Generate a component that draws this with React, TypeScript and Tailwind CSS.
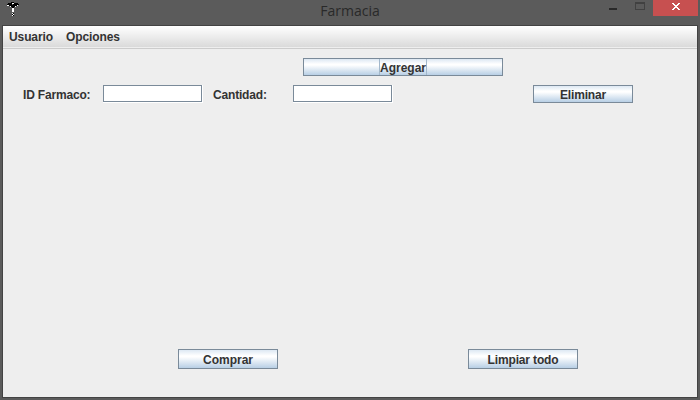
import type { ReactNode } from "react";

function SwingButton({ children, className, focused = false }: { children: ReactNode; className: string; focused?: boolean }) {
  return (
    <button
      className={`flex shrink-0 items-center justify-center border border-[#7a8a99] bg-[linear-gradient(to_bottom,#dde8f3_0%,#ffffff_32%,#ffffff_38%,#b8cfe5_100%)] whitespace-nowrap ${className}`}
    >
      {focused ? (
        <span className="flex h-full w-12 items-center justify-center border-x border-[#a3b8cc] pt-0.5">{children}</span>
      ) : (
        <span className="pt-0.5">{children}</span>
      )}
    </button>
  );
}

function TextField({ label }: { label: string }) {
  return (
    <div className="h-[18px] w-[100px] shrink-0 border-r border-b border-white">
      <input aria-label={label} className="block h-[17px] w-[99px] border border-[#7a8a99] bg-white px-0.5 outline-none" />
    </div>
  );
}

function AppIcon() {
  return (
    <svg width="14" height="16" viewBox="0 0 14 16" shapeRendering="crispEdges" className="ml-1.5 mt-0.5">
      <path fill="#000" d="M5 0h3v1H5zM2 1h4v1H2zM8 1h4v1H8zM1 2h5v1H1zM7 2h6v1H7zM3 3h8v1H3zM5 4h4v1H5zM6 5h2v1H6zM6 11h2v3H6z" />
      <path fill="#fff" d="M6 1h2v1H6zM1 3h2v1H1zM11 3h1v1h-1zM4 4h1v1H4zM9 4h1v1H9zM6 6h2v4H6zM6 11h1v1H6zM7 12h1v1H7zM6 13h1v1H6z" />
    </svg>
  );
}

function TitleBar() {
  return (
    <header className="grid h-[25px] grid-cols-[1fr_auto_1fr]">
      <AppIcon />
      <h1 className="mt-px font-['Open_Sans',sans-serif] text-[14px] font-normal leading-5 text-[#292929]">Farmacia</h1>
      <div className="flex justify-end pr-0.5">
        <svg width="9" height="16" viewBox="0 0 9 16" shapeRendering="crispEdges" className="mr-[17px]">
          <path fill="#292929" d="M0 8h8v2H0z" />
        </svg>
        <svg width="10" height="16" viewBox="0 0 10 16" shapeRendering="crispEdges" className="mr-2">
          <path fill="none" stroke="#414141" d="M.5 2.5h9v7h-9zM0 3.5h10" />
        </svg>
        <div className="h-4 w-[45px] bg-[#c75050]">
          <svg width="45" height="16" viewBox="0 0 45 16" shapeRendering="crispEdges">
            <path fill="#fff" d="M19 3h2v1h-2zM25 3h2v1h-2zM20 4h2v1h-2zM24 4h2v1h-2zM21 5h4v1h-4zM22 6h2v1h-2zM21 7h4v1h-4zM20 8h2v1h-2zM24 8h2v1h-2zM19 9h2v1h-2zM25 9h2v1h-2z" />
          </svg>
        </div>
      </div>
    </header>
  );
}

export default function App() {
  return (
    <div className="flex h-[400px] w-[700px] flex-col overflow-hidden bg-[#5b5b5b] font-['Liberation_Sans',Arial,sans-serif] text-[12px] font-bold leading-4 text-[#333333]">
      <TitleBar />
      <div className="mx-0.5 mb-0.5 flex grow flex-col border border-[#434343] bg-[#eeeeee]">
        <nav className="flex h-[23px] shrink-0 border-b border-[#cccccc] bg-[linear-gradient(to_bottom,#ffffff,#dadada_21px,#eeeeee_21px)] pt-[3px] pl-1.5 tracking-[-0.1px]">
          <span className="w-[57px]">Usuario</span>
          <span>Opciones</span>
        </nav>
        <main className="flex grow flex-col">
          <SwingButton focused className="mt-[9px] ml-[300px] h-[18px] w-[200px]">Agregar</SwingButton>
          <div className="mt-[9px] flex h-[18px] pl-5">
            <label className="w-20 pt-0.5 tracking-[-0.18px]">ID Farmaco:</label>
            <TextField label="ID Farmaco" />
            <label className="ml-2.5 w-20 pt-0.5 tracking-[-0.18px]">Cantidad:</label>
            <TextField label="Cantidad" />
            <SwingButton className="ml-[140px] h-[18px] w-[100px] tracking-[-0.15px]">Eliminar</SwingButton>
          </div>
          <div className="mt-auto mb-7 flex pl-[175px]">
            <SwingButton className="h-5 w-[100px]">Comprar</SwingButton>
            <SwingButton className="ml-[190px] h-5 w-[110px] tracking-[-0.15px]">Limpiar todo</SwingButton>
          </div>
        </main>
      </div>
    </div>
  );
}
